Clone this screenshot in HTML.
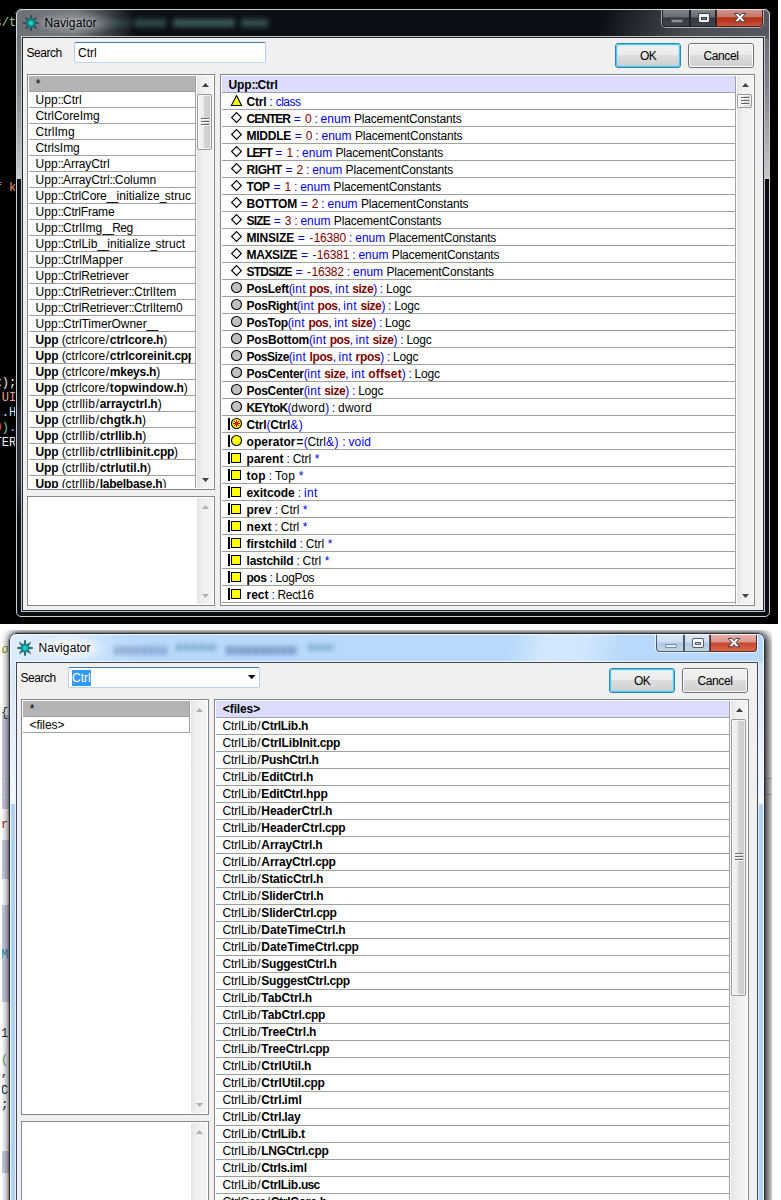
<!DOCTYPE html>
<html><head><meta charset="utf-8"><title>Navigator</title>
<style>
html,body{margin:0;padding:0}
body{width:781px;height:1200px;overflow:hidden;background:#fff;position:relative;font-family:"Liberation Sans",sans-serif;font-size:12px;color:#000}
div,svg,i,b{position:absolute;box-sizing:border-box;display:block}
span{white-space:pre}
#s1{left:0;top:0;width:778px;height:624px;background:#000;overflow:hidden}
#s2{left:2px;top:630px;width:770px;height:570px;background:#fff;overflow:hidden}
.code{font-family:"Liberation Mono",monospace;font-size:12px;line-height:16px;white-space:pre}
.win{width:756px;border-radius:7px 7px 6px 6px;overflow:hidden}
.w1{background:#0c1016}
.w2{background:#b0d2f8;box-shadow:0 0 8px 1px rgba(0,0,0,.6),4px 2px 7px 1px rgba(0,0,0,.5),0 0 2px rgba(0,0,0,.5)}
.w2 .tb{left:0;top:0;right:0;height:30px;background:linear-gradient(100deg,rgba(255,255,255,0) 0,rgba(255,255,255,0) 66%,rgba(255,255,255,.4) 71%,rgba(255,255,255,.35) 76%,rgba(255,255,255,0) 81%),linear-gradient(to right,rgba(255,255,255,.5) 0,rgba(255,255,255,.45) 70px,rgba(255,255,255,.12) 105px,rgba(255,255,255,0) 135px),#b8d9fb}
.w2 .side{background:linear-gradient(#d6e5f6,#e9f1fb 60%,#f2f7fd);top:30px;height:141px}
.w2 .glow{left:20px;top:2px;width:80px;height:26px;background:radial-gradient(ellipse 50% 50% at 50% 50%,rgba(255,255,255,.85),rgba(255,255,255,.4) 60%,rgba(255,255,255,0) 100%)}
.fr{left:0;top:0;right:0;bottom:0;border-radius:7px 7px 6px 6px;z-index:5;pointer-events:none}
.w1 .fr{border:1px solid #000}
.w1 .fr::after{content:"";position:absolute;box-sizing:border-box;left:0;top:0;right:0;bottom:0;border:1px solid rgba(235,238,240,.85);border-radius:6px 6px 5px 5px}
.w2 .fr{border:1px solid #27303a;box-shadow:inset 0 0 0 1px rgba(255,255,255,.8)}
.side{top:16px;width:4px;height:155px;background:linear-gradient(#686c72,#80848a 40%,#c8cacc)}
.side.l{left:2px}.side.r{right:2px}
.w1 .glow{left:0;top:0;width:130px;height:30px;background:linear-gradient(to right,#6e7278 0,#767a80 60px,rgba(80,84,90,.7) 94px,rgba(40,44,50,0) 120px)}
.glow2{left:14px;top:3px;width:92px;height:24px;background:radial-gradient(ellipse 50% 50% at 50% 50%,rgba(180,184,188,.8),rgba(150,154,158,.5) 55%,rgba(110,114,118,0) 100%)}
.refl{left:540px;top:0;width:216px;height:30px;background:linear-gradient(105deg,rgba(84,88,94,0) 0,rgba(84,88,94,0) 22%,rgba(84,88,94,.85) 62%,rgba(86,90,96,1) 100%)}
.star{left:7px;top:6px}
.title{left:29.5px;top:7px;line-height:16px;white-space:nowrap}
.w1 .title{text-shadow:0 0 4px rgba(255,255,255,.5)}
.w1 .lg{left:2px;width:4px;top:380px;height:130px;background:linear-gradient(rgba(70,80,90,0),rgba(70,80,90,.55) 25%,rgba(70,80,90,.55) 70%,rgba(70,80,90,0))}
.w2 .title{text-shadow:0 0 5px #fff,0 0 8px #fff}
.blur{filter:blur(2.5px);height:5px;top:14px}
.w1 .blur{background:#3f6060;top:11px;height:8px;filter:blur(2.5px)}
.w1 .b1{left:92px;width:24px;opacity:.45}.w1 .b2{left:119px;width:32px;opacity:.7}.w1 .b3{left:158px;width:62px;opacity:.9}.w1 .b4{left:226px;width:27px;opacity:.8}
.w2 .blur{background:repeating-linear-gradient(90deg,#3e5c90 0,#3e5c90 4px,rgba(62,92,144,.55) 4px,rgba(62,92,144,.55) 7px);top:13px;height:9px;filter:blur(2px)}
.w2 .b1{left:105px;width:53px;opacity:.38}.w2 .b2{left:167px;width:41px;opacity:.36;top:11px;height:7px;background:repeating-linear-gradient(90deg,#2a7088 0,#2a7088 5px,rgba(42,112,136,.55) 5px,rgba(42,112,136,.55) 8px)}.w2 .b3{left:217px;width:71px;opacity:.5}.w2 .b4{left:299px;width:26px;opacity:.36;top:11px;height:7px;background:repeating-linear-gradient(90deg,#2a7088 0,#2a7088 5px,rgba(42,112,136,.55) 5px,rgba(42,112,136,.55) 8px)}
.caps{left:646px;top:1px;width:103px;height:19px;border-radius:0 0 5px 5px;overflow:hidden}
.w1 .caps{box-shadow:inset 0 0 0 1px rgba(200,205,210,.75);border:0}
.w2 .caps{box-shadow:inset 0 0 0 1px rgba(255,255,255,.7)}
.cb{top:0;height:18px}
.cb.min{left:1px;width:28px}.cb.max{left:29px;width:26px}.cb.cls{left:55px;width:47px;border-radius:0 0 4px 0}
.cb.min{border-radius:0 0 0 4px}
.w1 .cb{border:1px solid #20242a;border-top:0;background:linear-gradient(#80848a 0,#6c7076 46%,#363a40 52%,#40444a 100%)}
.w1 .cb.cls{background:linear-gradient(#d09a90 0,#c67668 46%,#b22e16 52%,#c8523a 100%);border-color:#50201a}
.w2 .cb{border:1px solid #4e5a6a;border-top:0;background:linear-gradient(#dbe8f5 0,#cfdff0 48%,#b3c9e2 52%,#c3d5ea 100%)}
.w2 .cb.cls{background:linear-gradient(#e7b5ad 0,#dc968a 48%,#c8432b 52%,#d9694f 100%);border-color:#5a2a24}
.cb.min i{left:8px;top:10px;width:12px;height:4px;border-radius:1px}
.w1 .cb.min i{background:#8e9298;border:1px solid #55595f}
.w2 .cb.min i{background:#e6eef8;border:1px solid #7a8aa0}
.cb.max i{left:8px;top:5px;width:10px;height:8px;border-radius:1px}
.w1 .cb.max i{border:2px solid #f4f4f4;border-top-width:3px;box-shadow:0 0 0 1px #3a3e44,inset 0 0 0 1px #3a3e44;background:#7a7e84}
.w2 .cb.max i{border:2px solid #fbfdff;border-top-width:3px;box-shadow:0 0 0 1px #55606e,inset 0 0 0 1px #55606e;background:#b8cce2}
.cb.cls svg{left:16px;top:3px}
.cl{left:8px;top:30px;width:740px;background:#f0f0f0}
.w1 .cl{box-shadow:0 0 0 1px #23272d,0 0 0 2px rgba(225,228,230,.85)}
.w2 .cl{box-shadow:0 0 0 1px #3c4754,0 0 0 2px rgba(255,255,255,.75)}
.lbl{line-height:16px;white-space:nowrap}
.edit{background:#fff;border:1px solid #b5cfe7;border-top-color:#3d7bad;border-bottom-color:#b7d9ed;border-radius:2px}
.etx{left:3px;top:1.5px;line-height:16px;white-space:nowrap}
.sel{background:#3399ff;color:#fff;display:inline-block;position:static}
.sel span{color:#fff}
.btn{width:66px;height:25px;border:1px solid #707070;border-radius:3px;background:linear-gradient(#f2f2f2 0,#ebebeb 46%,#dddddd 50%,#cfcfcf 100%)}
.btn b{left:0;top:0;right:0;bottom:0;border:1px solid rgba(255,255,255,.9);border-radius:2px}
.btn.def{border-color:#3c7fb1}
.btn.def b{border:1px solid #3fd0f7;box-shadow:inset 0 0 0 1px rgba(120,220,250,.35)}
.bt{left:0;right:0;top:4px;line-height:16px;text-align:center;white-space:nowrap}
.pane{background:#fff;box-shadow:inset 0 0 0 1px #828790}
.ct{left:2px;top:2px;right:2px;bottom:2px;overflow:hidden;background:#fff}
.lh{left:0;top:0;background:#b4b4b4}
.rh{left:0;top:0;background:#dcdcfc}
.hl{height:1px;background:#a0a0a0;left:0}
.vl{width:1px;background:#a0a0a0}
.tx{top:0;line-height:16px;white-space:nowrap}
.lr .tx{left:6px;width:156px;height:16px;overflow:hidden;padding-left:.5px}
.lr{left:0;width:166px;height:16px;border-bottom:1px solid #a0a0a0;overflow:hidden}
.w1 .rr .tx{top:1px}
.rr{left:0;width:513px;height:17px;border-bottom:1px solid #a0a0a0;overflow:hidden}
.ic{left:5px;top:0}
.sb{width:17px;background:linear-gradient(to right,#e4e4e4,#f0f0f0 35%,#f3f3f3)}
.th{left:0;width:15px;border:1px solid #989898;border-radius:2px;background:linear-gradient(to right,#f4f4f4 0,#ebebeb 45%,#d4d4d4 50%,#cdcdcd 100%);box-shadow:inset 0 0 0 1px rgba(255,255,255,.7)}
.th i{left:3px;width:8px;height:8px;background:linear-gradient(#666 0,#666 1px,#fff 1px,#fff 2px,transparent 2px,transparent 3px,#666 3px,#666 4px,#fff 4px,#fff 5px,transparent 5px,transparent 6px,#666 6px,#666 7px,#fff 7px,#fff 8px)}
.ed2{left:0;top:0;right:0;bottom:0}
.band{left:0;width:12px;background:#cfcfe2}
.band.r{left:auto;right:0}
.gl{left:0;right:0;height:1px;background:#a8dca8}
.shl{left:0;top:0;width:8px;bottom:0;background:linear-gradient(to right,rgba(0,0,0,0),rgba(0,0,0,.12) 50%,rgba(0,0,0,.4))}
.shr{right:0;top:0;width:7px;bottom:0;background:linear-gradient(to left,rgba(0,0,0,0),rgba(0,0,0,.12) 50%,rgba(0,0,0,.4))}
.sht{left:0;right:0;top:0;height:3px;background:linear-gradient(rgba(0,0,0,0),rgba(0,0,0,.25))}

</style></head>
<body>
<div id="s1"><div class="code" style="left:-5.5px;top:15px;color:#8fd07f;font-weight:normal">s/t</div><div class="code" style="left:-5.5px;top:179.5px;color:#f0906a;font-weight:normal">f k</div><div class="code" style="left:-5.5px;top:374.5px;color:#f0f0f0;">x);</div><div class="code" style="left:-5.5px;top:389.5px;color:#e8a090;"> UI</div><div class="code" style="left:-5.5px;top:404.5px;color:#d0e0f0;"> .H</div><div class="code" style="left:-5.5px;top:419.5px"><span style="color:#e06040">0</span><span style="color:#60d0a0">)</span><span style="color:#a0b0e0">.</span></div><div class="code" style="left:-5.5px;top:434.5px;color:#f0f0f0;">TER</div>
<div class="win w1" style="left:15px;top:8px;height:610px"><div class="fr"></div><div class="side l"></div><div class="side r"></div><div class="lg"></div><div class="refl"></div><div class="glow"></div><div class="glow2"></div><div class="blur b1"></div><div class="blur b2"></div><div class="blur b3"></div><div class="blur b4"></div><svg class="star" width="18" height="18" viewBox="-9 -9 18 18"><defs><radialGradient id="sg1"><stop offset="0" stop-color="#20ecec"/><stop offset=".32" stop-color="#0caaaa"/><stop offset="1" stop-color="#066868"/></radialGradient></defs>
<path d="M0 -8 L1.2 -2.9 L5.5 -5.5 L2.9 -1.2 L8 0 L2.9 1.2 L5.5 5.5 L1.2 2.9 L0 8 L-1.2 2.9 L-5.5 5.5 L-2.9 1.2 L-8 0 L-2.9 -1.2 L-5.5 -5.5 L-1.2 -2.9 Z" fill="url(#sg1)" stroke="#154040" stroke-width=".8" stroke-opacity=".85"/></svg><div class="title"><span style="letter-spacing:0.09px;">Navigator</span></div><div class="caps"><div class="cb min"><i></i></div><div class="cb max"><i></i></div><div class="cb cls"><svg width="14" height="11" viewBox="0 0 14 11"><path d="M1.2 1.4h3.9L7 3.7 8.9 1.4h3.9L9 5.6l3.8 4.2H8.9L7 7.5 5.1 9.8H1.2L5 5.6z" fill="#fff" stroke="#3c3c46" stroke-width="1" stroke-linejoin="round"/></svg></div></div><div class="cl" style="height:572px"><div class="lbl" style="left:3.5px;top:7px"><span style="letter-spacing:-0.46px;">Search</span></div>
<div class="edit" style="left:51px;top:4px;width:192px;height:21px"><div class="etx"><span style="letter-spacing:-0.02px;">Ctrl</span></div></div>
<div class="btn def" style="left:592px;top:5px"><b></b><div class="bt"><span style="letter-spacing:-0.67px;">OK</span></div></div>
<div class="btn" style="left:665px;top:5px"><b></b><div class="bt"><span style="letter-spacing:-0.39px;">Cancel</span></div></div>
<div class="pane" style="left:4px;top:36px;width:188px;height:416px"><div class="ct"><div class="lh" style="width:166px;height:15px"><div class="tx" style="left:6.5px"><span style="padding:0 0.17px;">*</span></div></div><div class="hl" style="top:15px;width:166px"></div><div class="lr" style="top:16px"><div class="tx"><span style="letter-spacing:0.11px;">Upp</span><span style="letter-spacing:-0.73px;">::</span><span style="letter-spacing:-0.02px;">Ctrl</span></div></div><div class="lr" style="top:32px"><div class="tx"><span style="letter-spacing:-0.06px;">CtrlCoreImg</span></div></div><div class="lr" style="top:48px"><div class="tx"><span style="letter-spacing:0.07px;">CtrlImg</span></div></div><div class="lr" style="top:64px"><div class="tx"><span style="letter-spacing:-0.06px;">CtrlsImg</span></div></div><div class="lr" style="top:80px"><div class="tx"><span style="letter-spacing:0.11px;">Upp</span><span style="letter-spacing:-0.73px;">::</span><span style="letter-spacing:-0.09px;">ArrayCtrl</span></div></div><div class="lr" style="top:96px"><div class="tx"><span style="letter-spacing:0.11px;">Upp</span><span style="letter-spacing:-0.73px;">::</span><span style="letter-spacing:-0.09px;">ArrayCtrl</span><span style="letter-spacing:-0.73px;">::</span><span style="letter-spacing:-0.02px;">Column</span></div></div><div class="lr" style="top:112px"><div class="tx"><span style="letter-spacing:0.11px;">Upp</span><span style="letter-spacing:-0.73px;">::</span><span style="letter-spacing:-0.15px;">CtrlCore</span><span style="letter-spacing:-1.69px;">__</span><span style="letter-spacing:0.05px;">initialize</span><span style="letter-spacing:-1.69px;">_</span><span style="letter-spacing:0.06px;">struct</span></div></div><div class="lr" style="top:128px"><div class="tx"><span style="letter-spacing:0.11px;">Upp</span><span style="letter-spacing:-0.73px;">::</span><span style="letter-spacing:-0.23px;">CtrlFrame</span></div></div><div class="lr" style="top:144px"><div class="tx"><span style="letter-spacing:0.11px;">Upp</span><span style="letter-spacing:-0.73px;">::</span><span style="letter-spacing:0.07px;">CtrlImg</span><span style="letter-spacing:-1.69px;">__</span><span style="letter-spacing:-0.50px;">Reg</span></div></div><div class="lr" style="top:160px"><div class="tx"><span style="letter-spacing:0.11px;">Upp</span><span style="letter-spacing:-0.73px;">::</span><span style="letter-spacing:-0.07px;">CtrlLib</span><span style="letter-spacing:-1.69px;">__</span><span style="letter-spacing:0.05px;">initialize</span><span style="letter-spacing:-1.69px;">_</span><span style="letter-spacing:0.06px;">struct</span></div></div><div class="lr" style="top:176px"><div class="tx"><span style="letter-spacing:0.11px;">Upp</span><span style="letter-spacing:-0.73px;">::</span><span style="letter-spacing:0.06px;">CtrlMapper</span></div></div><div class="lr" style="top:192px"><div class="tx"><span style="letter-spacing:0.11px;">Upp</span><span style="letter-spacing:-0.73px;">::</span><span style="letter-spacing:-0.13px;">CtrlRetriever</span></div></div><div class="lr" style="top:208px"><div class="tx"><span style="letter-spacing:0.11px;">Upp</span><span style="letter-spacing:-0.73px;">::</span><span style="letter-spacing:-0.13px;">CtrlRetriever</span><span style="letter-spacing:-0.73px;">::</span><span style="letter-spacing:0.05px;">CtrlItem</span></div></div><div class="lr" style="top:224px"><div class="tx"><span style="letter-spacing:0.11px;">Upp</span><span style="letter-spacing:-0.73px;">::</span><span style="letter-spacing:-0.13px;">CtrlRetriever</span><span style="letter-spacing:-0.73px;">::</span><span style="letter-spacing:0.02px;">CtrlItem0</span></div></div><div class="lr" style="top:240px"><div class="tx"><span style="letter-spacing:0.11px;">Upp</span><span style="letter-spacing:-0.73px;">::</span><span style="letter-spacing:-0.05px;">CtrlTimerOwner</span><span style="letter-spacing:-1.69px;">__</span></div></div><div class="lr" style="top:256px"><div class="tx"><span style="letter-spacing:-0.09px;font-weight:bold;">Upp</span><span style="letter-spacing:-0.21px;"> (</span><span style="letter-spacing:0.04px;">ctrlcore</span><span style="padding:0 0.67px;">/</span><span style="letter-spacing:-0.11px;font-weight:bold;">ctrlcore</span><span style="letter-spacing:-0.35px;font-weight:bold;">.</span><span style="letter-spacing:-0.07px;font-weight:bold;">h</span><span style="letter-spacing:-0.38px;">)</span></div></div><div class="lr" style="top:272px"><div class="tx"><span style="letter-spacing:-0.09px;font-weight:bold;">Upp</span><span style="letter-spacing:-0.21px;"> (</span><span style="letter-spacing:0.04px;">ctrlcore</span><span style="padding:0 0.67px;">/</span><span style="letter-spacing:-0.03px;font-weight:bold;">ctrlcoreinit</span><span style="letter-spacing:-0.35px;font-weight:bold;">.</span><span style="letter-spacing:-0.32px;font-weight:bold;">cpp</span><span style="letter-spacing:-0.38px;">)</span></div></div><div class="lr" style="top:288px"><div class="tx"><span style="letter-spacing:-0.09px;font-weight:bold;">Upp</span><span style="letter-spacing:-0.21px;"> (</span><span style="letter-spacing:0.04px;">ctrlcore</span><span style="padding:0 0.67px;">/</span><span style="letter-spacing:-0.25px;font-weight:bold;">mkeys</span><span style="letter-spacing:-0.35px;font-weight:bold;">.</span><span style="letter-spacing:-0.07px;font-weight:bold;">h</span><span style="letter-spacing:-0.38px;">)</span></div></div><div class="lr" style="top:304px"><div class="tx"><span style="letter-spacing:-0.09px;font-weight:bold;">Upp</span><span style="letter-spacing:-0.21px;"> (</span><span style="letter-spacing:0.04px;">ctrlcore</span><span style="padding:0 0.67px;">/</span><span style="letter-spacing:0.11px;font-weight:bold;">topwindow</span><span style="letter-spacing:-0.35px;font-weight:bold;">.</span><span style="letter-spacing:-0.07px;font-weight:bold;">h</span><span style="letter-spacing:-0.38px;">)</span></div></div><div class="lr" style="top:320px"><div class="tx"><span style="letter-spacing:-0.09px;font-weight:bold;">Upp</span><span style="letter-spacing:-0.21px;"> (</span><span style="letter-spacing:0.22px;">ctrllib</span><span style="padding:0 0.67px;">/</span><span style="letter-spacing:-0.04px;font-weight:bold;">arrayctrl</span><span style="letter-spacing:-0.35px;font-weight:bold;">.</span><span style="letter-spacing:-0.07px;font-weight:bold;">h</span><span style="letter-spacing:-0.38px;">)</span></div></div><div class="lr" style="top:336px"><div class="tx"><span style="letter-spacing:-0.09px;font-weight:bold;">Upp</span><span style="letter-spacing:-0.21px;"> (</span><span style="letter-spacing:0.22px;">ctrllib</span><span style="padding:0 0.67px;">/</span><span style="letter-spacing:-0.01px;font-weight:bold;">chgtk</span><span style="letter-spacing:-0.35px;font-weight:bold;">.</span><span style="letter-spacing:-0.07px;font-weight:bold;">h</span><span style="letter-spacing:-0.38px;">)</span></div></div><div class="lr" style="top:352px"><div class="tx"><span style="letter-spacing:-0.09px;font-weight:bold;">Upp</span><span style="letter-spacing:-0.21px;"> (</span><span style="letter-spacing:0.22px;">ctrllib</span><span style="padding:0 0.67px;">/</span><span style="letter-spacing:-0.04px;font-weight:bold;">ctrllib</span><span style="letter-spacing:-0.35px;font-weight:bold;">.</span><span style="letter-spacing:-0.07px;font-weight:bold;">h</span><span style="letter-spacing:-0.38px;">)</span></div></div><div class="lr" style="top:368px"><div class="tx"><span style="letter-spacing:-0.09px;font-weight:bold;">Upp</span><span style="letter-spacing:-0.21px;"> (</span><span style="letter-spacing:0.22px;">ctrllib</span><span style="padding:0 0.67px;">/</span><span style="letter-spacing:0.02px;font-weight:bold;">ctrllibinit</span><span style="letter-spacing:-0.35px;font-weight:bold;">.</span><span style="letter-spacing:-0.32px;font-weight:bold;">cpp</span><span style="letter-spacing:-0.38px;">)</span></div></div><div class="lr" style="top:384px"><div class="tx"><span style="letter-spacing:-0.09px;font-weight:bold;">Upp</span><span style="letter-spacing:-0.21px;"> (</span><span style="letter-spacing:0.22px;">ctrllib</span><span style="padding:0 0.67px;">/</span><span style="letter-spacing:0.05px;font-weight:bold;">ctrlutil</span><span style="letter-spacing:-0.35px;font-weight:bold;">.</span><span style="letter-spacing:-0.07px;font-weight:bold;">h</span><span style="letter-spacing:-0.38px;">)</span></div></div><div class="lr" style="top:400px"><div class="tx"><span style="letter-spacing:-0.09px;font-weight:bold;">Upp</span><span style="letter-spacing:-0.21px;"> (</span><span style="letter-spacing:0.22px;">ctrllib</span><span style="padding:0 0.67px;">/</span><span style="letter-spacing:-0.24px;font-weight:bold;">labelbase</span><span style="letter-spacing:-0.35px;font-weight:bold;">.</span><span style="letter-spacing:-0.07px;font-weight:bold;">h</span><span style="letter-spacing:-0.38px;">)</span></div></div><div class="vl" style="left:166px;top:0;height:412px"></div><div class="sb" style="left:168px;top:0px;height:412px"><svg width="7" height="4" viewBox="0 0 7 4" style="position:absolute;left:5px;top:7px"><path d="M0 4 L3.5 0 L7 4 Z" fill="#404040"/></svg><svg width="7" height="4" viewBox="0 0 7 4" style="position:absolute;left:5px;bottom:6px"><path d="M0 0 L7 0 L3.5 4 Z" fill="#404040"/></svg><div class="th" style="top:18px;height:56px"><i style="top:23px"></i></div></div></div></div>
<div class="pane" style="left:4px;top:458px;width:188px;height:110px"><div class="ct"><div class="sb" style="left:168px;top:0px;height:106px"><svg width="7" height="4" viewBox="0 0 7 4" style="position:absolute;left:5px;top:7px"><path d="M0 4 L3.5 0 L7 4 Z" fill="#b0b0b0"/></svg><svg width="7" height="4" viewBox="0 0 7 4" style="position:absolute;left:5px;bottom:6px"><path d="M0 0 L7 0 L3.5 4 Z" fill="#b0b0b0"/></svg></div></div></div>
<div class="pane" style="left:197px;top:36px;width:535px;height:532px"><div class="ct"><div class="rh" style="width:513px;height:16px"><div class="tx" style="left:6.5px;top:1px"><span style="letter-spacing:-0.09px;font-weight:bold;">Upp</span><span style="letter-spacing:-1.01px;font-weight:bold;">::</span><span style="letter-spacing:-0.16px;font-weight:bold;">Ctrl</span></div></div><div class="hl" style="top:16px;width:513px"></div><div class="rr" style="top:17px"><svg class="ic" width="17" height="16" viewBox="0 0 17 16"><path d="M9.5 2.6 L14.6 12.5 H4.4 Z" fill="#ffff00" stroke="#000" stroke-width="1.1" stroke-linejoin="miter"/></svg><div class="tx" style="left:24.5px"><span style="letter-spacing:-0.16px;font-weight:bold;">Ctrl</span><span style="letter-spacing:-0.28px;color:#0000f0;"> : </span><span style="letter-spacing:-0.52px;color:#0000f0;">class</span></div></div><div class="rr" style="top:34px"><svg class="ic" width="17" height="16" viewBox="0 0 17 16"><path d="M9.5 2.6 L14.4 7.5 L9.5 12.4 L4.6 7.5 Z" fill="#fff" stroke="#000" stroke-width="1.1"/></svg><div class="tx" style="left:24.5px"><span style="letter-spacing:-0.96px;font-weight:bold;">CENTER</span><span style="letter-spacing:0.37px;color:#0000f0;"> = </span><span style="letter-spacing:-0.20px;color:#800000;">0</span><span style="letter-spacing:-0.28px;color:#0000f0;"> : </span><span style="letter-spacing:0.03px;color:#0000f0;">enum</span><span style="letter-spacing:-0.05px;color:#0000f0;"> </span><span style="letter-spacing:-0.18px;">PlacementConstants</span></div></div><div class="rr" style="top:51px"><svg class="ic" width="17" height="16" viewBox="0 0 17 16"><path d="M9.5 2.6 L14.4 7.5 L9.5 12.4 L4.6 7.5 Z" fill="#fff" stroke="#000" stroke-width="1.1"/></svg><div class="tx" style="left:24.5px"><span style="letter-spacing:-0.25px;font-weight:bold;">MIDDLE</span><span style="letter-spacing:0.37px;color:#0000f0;"> = </span><span style="letter-spacing:-0.20px;color:#800000;">0</span><span style="letter-spacing:-0.28px;color:#0000f0;"> : </span><span style="letter-spacing:0.03px;color:#0000f0;">enum</span><span style="letter-spacing:-0.05px;color:#0000f0;"> </span><span style="letter-spacing:-0.18px;">PlacementConstants</span></div></div><div class="rr" style="top:68px"><svg class="ic" width="17" height="16" viewBox="0 0 17 16"><path d="M9.5 2.6 L14.4 7.5 L9.5 12.4 L4.6 7.5 Z" fill="#fff" stroke="#000" stroke-width="1.1"/></svg><div class="tx" style="left:24.5px"><span style="letter-spacing:-1.23px;font-weight:bold;">LEFT</span><span style="letter-spacing:0.37px;color:#0000f0;"> = </span><span style="letter-spacing:-0.20px;color:#800000;">1</span><span style="letter-spacing:-0.28px;color:#0000f0;"> : </span><span style="letter-spacing:0.03px;color:#0000f0;">enum</span><span style="letter-spacing:-0.05px;color:#0000f0;"> </span><span style="letter-spacing:-0.18px;">PlacementConstants</span></div></div><div class="rr" style="top:85px"><svg class="ic" width="17" height="16" viewBox="0 0 17 16"><path d="M9.5 2.6 L14.4 7.5 L9.5 12.4 L4.6 7.5 Z" fill="#fff" stroke="#000" stroke-width="1.1"/></svg><div class="tx" style="left:24.5px"><span style="letter-spacing:-0.43px;font-weight:bold;">RIGHT</span><span style="letter-spacing:0.37px;color:#0000f0;"> = </span><span style="letter-spacing:-0.20px;color:#800000;">2</span><span style="letter-spacing:-0.28px;color:#0000f0;"> : </span><span style="letter-spacing:0.03px;color:#0000f0;">enum</span><span style="letter-spacing:-0.05px;color:#0000f0;"> </span><span style="letter-spacing:-0.18px;">PlacementConstants</span></div></div><div class="rr" style="top:102px"><svg class="ic" width="17" height="16" viewBox="0 0 17 16"><path d="M9.5 2.6 L14.4 7.5 L9.5 12.4 L4.6 7.5 Z" fill="#fff" stroke="#000" stroke-width="1.1"/></svg><div class="tx" style="left:24.5px"><span style="letter-spacing:-0.42px;font-weight:bold;">TOP</span><span style="letter-spacing:0.37px;color:#0000f0;"> = </span><span style="letter-spacing:-0.20px;color:#800000;">1</span><span style="letter-spacing:-0.28px;color:#0000f0;"> : </span><span style="letter-spacing:0.03px;color:#0000f0;">enum</span><span style="letter-spacing:-0.05px;color:#0000f0;"> </span><span style="letter-spacing:-0.18px;">PlacementConstants</span></div></div><div class="rr" style="top:119px"><svg class="ic" width="17" height="16" viewBox="0 0 17 16"><path d="M9.5 2.6 L14.4 7.5 L9.5 12.4 L4.6 7.5 Z" fill="#fff" stroke="#000" stroke-width="1.1"/></svg><div class="tx" style="left:24.5px"><span style="letter-spacing:-0.21px;font-weight:bold;">BOTTOM</span><span style="letter-spacing:0.37px;color:#0000f0;"> = </span><span style="letter-spacing:-0.20px;color:#800000;">2</span><span style="letter-spacing:-0.28px;color:#0000f0;"> : </span><span style="letter-spacing:0.03px;color:#0000f0;">enum</span><span style="letter-spacing:-0.05px;color:#0000f0;"> </span><span style="letter-spacing:-0.18px;">PlacementConstants</span></div></div><div class="rr" style="top:136px"><svg class="ic" width="17" height="16" viewBox="0 0 17 16"><path d="M9.5 2.6 L14.4 7.5 L9.5 12.4 L4.6 7.5 Z" fill="#fff" stroke="#000" stroke-width="1.1"/></svg><div class="tx" style="left:24.5px"><span style="letter-spacing:-0.81px;font-weight:bold;">SIZE</span><span style="letter-spacing:0.37px;color:#0000f0;"> = </span><span style="letter-spacing:-0.20px;color:#800000;">3</span><span style="letter-spacing:-0.28px;color:#0000f0;"> : </span><span style="letter-spacing:0.03px;color:#0000f0;">enum</span><span style="letter-spacing:-0.05px;color:#0000f0;"> </span><span style="letter-spacing:-0.18px;">PlacementConstants</span></div></div><div class="rr" style="top:153px"><svg class="ic" width="17" height="16" viewBox="0 0 17 16"><path d="M9.5 2.6 L14.4 7.5 L9.5 12.4 L4.6 7.5 Z" fill="#fff" stroke="#000" stroke-width="1.1"/></svg><div class="tx" style="left:24.5px"><span style="letter-spacing:-0.16px;font-weight:bold;">MINSIZE</span><span style="letter-spacing:0.37px;color:#0000f0;"> = </span><span style="padding:0 0.40px;color:#800000;">-</span><span style="letter-spacing:-0.20px;color:#800000;">16380</span><span style="letter-spacing:-0.28px;color:#0000f0;"> : </span><span style="letter-spacing:0.03px;color:#0000f0;">enum</span><span style="letter-spacing:-0.05px;color:#0000f0;"> </span><span style="letter-spacing:-0.18px;">PlacementConstants</span></div></div><div class="rr" style="top:170px"><svg class="ic" width="17" height="16" viewBox="0 0 17 16"><path d="M9.5 2.6 L14.4 7.5 L9.5 12.4 L4.6 7.5 Z" fill="#fff" stroke="#000" stroke-width="1.1"/></svg><div class="tx" style="left:24.5px"><span style="letter-spacing:-0.37px;font-weight:bold;">MAXSIZE</span><span style="letter-spacing:0.37px;color:#0000f0;"> = </span><span style="padding:0 0.40px;color:#800000;">-</span><span style="letter-spacing:-0.20px;color:#800000;">16381</span><span style="letter-spacing:-0.28px;color:#0000f0;"> : </span><span style="letter-spacing:0.03px;color:#0000f0;">enum</span><span style="letter-spacing:-0.05px;color:#0000f0;"> </span><span style="letter-spacing:-0.18px;">PlacementConstants</span></div></div><div class="rr" style="top:187px"><svg class="ic" width="17" height="16" viewBox="0 0 17 16"><path d="M9.5 2.6 L14.4 7.5 L9.5 12.4 L4.6 7.5 Z" fill="#fff" stroke="#000" stroke-width="1.1"/></svg><div class="tx" style="left:24.5px"><span style="letter-spacing:-0.76px;font-weight:bold;">STDSIZE</span><span style="letter-spacing:0.37px;color:#0000f0;"> = </span><span style="padding:0 0.40px;color:#800000;">-</span><span style="letter-spacing:-0.20px;color:#800000;">16382</span><span style="letter-spacing:-0.28px;color:#0000f0;"> : </span><span style="letter-spacing:0.03px;color:#0000f0;">enum</span><span style="letter-spacing:-0.05px;color:#0000f0;"> </span><span style="letter-spacing:-0.18px;">PlacementConstants</span></div></div><div class="rr" style="top:204px"><svg class="ic" width="17" height="16" viewBox="0 0 17 16"><circle cx="9.5" cy="7.5" r="5" fill="#c0c0c0" stroke="#000" stroke-width="1.1"/></svg><div class="tx" style="left:24.5px"><span style="letter-spacing:-0.27px;font-weight:bold;">PosLeft</span><span style="letter-spacing:-0.38px;color:#0000f0;">(</span><span style="letter-spacing:0.36px;color:#0000f0;">int</span><span style="letter-spacing:-0.05px;color:#0000f0;"> </span><span style="letter-spacing:-0.49px;font-weight:bold;color:#800000;">pos</span><span style="letter-spacing:-0.39px;color:#0000f0;">, </span><span style="letter-spacing:0.36px;color:#0000f0;">int</span><span style="letter-spacing:-0.05px;color:#0000f0;"> </span><span style="letter-spacing:-0.42px;font-weight:bold;color:#800000;">size</span><span style="letter-spacing:-0.38px;color:#0000f0;">)</span><span style="letter-spacing:-0.28px;color:#0000f0;"> : </span><span style="letter-spacing:-0.19px;">Logc</span></div></div><div class="rr" style="top:221px"><svg class="ic" width="17" height="16" viewBox="0 0 17 16"><circle cx="9.5" cy="7.5" r="5" fill="#c0c0c0" stroke="#000" stroke-width="1.1"/></svg><div class="tx" style="left:24.5px"><span style="letter-spacing:-0.29px;font-weight:bold;">PosRight</span><span style="letter-spacing:-0.38px;color:#0000f0;">(</span><span style="letter-spacing:0.36px;color:#0000f0;">int</span><span style="letter-spacing:-0.05px;color:#0000f0;"> </span><span style="letter-spacing:-0.49px;font-weight:bold;color:#800000;">pos</span><span style="letter-spacing:-0.39px;color:#0000f0;">, </span><span style="letter-spacing:0.36px;color:#0000f0;">int</span><span style="letter-spacing:-0.05px;color:#0000f0;"> </span><span style="letter-spacing:-0.42px;font-weight:bold;color:#800000;">size</span><span style="letter-spacing:-0.38px;color:#0000f0;">)</span><span style="letter-spacing:-0.28px;color:#0000f0;"> : </span><span style="letter-spacing:-0.19px;">Logc</span></div></div><div class="rr" style="top:238px"><svg class="ic" width="17" height="16" viewBox="0 0 17 16"><circle cx="9.5" cy="7.5" r="5" fill="#c0c0c0" stroke="#000" stroke-width="1.1"/></svg><div class="tx" style="left:24.5px"><span style="letter-spacing:-0.32px;font-weight:bold;">PosTop</span><span style="letter-spacing:-0.38px;color:#0000f0;">(</span><span style="letter-spacing:0.36px;color:#0000f0;">int</span><span style="letter-spacing:-0.05px;color:#0000f0;"> </span><span style="letter-spacing:-0.49px;font-weight:bold;color:#800000;">pos</span><span style="letter-spacing:-0.39px;color:#0000f0;">, </span><span style="letter-spacing:0.36px;color:#0000f0;">int</span><span style="letter-spacing:-0.05px;color:#0000f0;"> </span><span style="letter-spacing:-0.42px;font-weight:bold;color:#800000;">size</span><span style="letter-spacing:-0.38px;color:#0000f0;">)</span><span style="letter-spacing:-0.28px;color:#0000f0;"> : </span><span style="letter-spacing:-0.19px;">Logc</span></div></div><div class="rr" style="top:255px"><svg class="ic" width="17" height="16" viewBox="0 0 17 16"><circle cx="9.5" cy="7.5" r="5" fill="#c0c0c0" stroke="#000" stroke-width="1.1"/></svg><div class="tx" style="left:24.5px"><span style="letter-spacing:-0.16px;font-weight:bold;">PosBottom</span><span style="letter-spacing:-0.38px;color:#0000f0;">(</span><span style="letter-spacing:0.36px;color:#0000f0;">int</span><span style="letter-spacing:-0.05px;color:#0000f0;"> </span><span style="letter-spacing:-0.49px;font-weight:bold;color:#800000;">pos</span><span style="letter-spacing:-0.39px;color:#0000f0;">, </span><span style="letter-spacing:0.36px;color:#0000f0;">int</span><span style="letter-spacing:-0.05px;color:#0000f0;"> </span><span style="letter-spacing:-0.42px;font-weight:bold;color:#800000;">size</span><span style="letter-spacing:-0.38px;color:#0000f0;">)</span><span style="letter-spacing:-0.28px;color:#0000f0;"> : </span><span style="letter-spacing:-0.19px;">Logc</span></div></div><div class="rr" style="top:272px"><svg class="ic" width="17" height="16" viewBox="0 0 17 16"><circle cx="9.5" cy="7.5" r="5" fill="#c0c0c0" stroke="#000" stroke-width="1.1"/></svg><div class="tx" style="left:24.5px"><span style="letter-spacing:-0.53px;font-weight:bold;">PosSize</span><span style="letter-spacing:-0.38px;color:#0000f0;">(</span><span style="letter-spacing:0.36px;color:#0000f0;">int</span><span style="letter-spacing:-0.05px;color:#0000f0;"> </span><span style="letter-spacing:-0.38px;font-weight:bold;color:#800000;">lpos</span><span style="letter-spacing:-0.39px;color:#0000f0;">, </span><span style="letter-spacing:0.36px;color:#0000f0;">int</span><span style="letter-spacing:-0.05px;color:#0000f0;"> </span><span style="letter-spacing:-0.34px;font-weight:bold;color:#800000;">rpos</span><span style="letter-spacing:-0.38px;color:#0000f0;">)</span><span style="letter-spacing:-0.28px;color:#0000f0;"> : </span><span style="letter-spacing:-0.19px;">Logc</span></div></div><div class="rr" style="top:289px"><svg class="ic" width="17" height="16" viewBox="0 0 17 16"><circle cx="9.5" cy="7.5" r="5" fill="#c0c0c0" stroke="#000" stroke-width="1.1"/></svg><div class="tx" style="left:24.5px"><span style="letter-spacing:-0.32px;font-weight:bold;">PosCenter</span><span style="letter-spacing:-0.38px;color:#0000f0;">(</span><span style="letter-spacing:0.36px;color:#0000f0;">int</span><span style="letter-spacing:-0.05px;color:#0000f0;"> </span><span style="letter-spacing:-0.42px;font-weight:bold;color:#800000;">size</span><span style="letter-spacing:-0.39px;color:#0000f0;">, </span><span style="letter-spacing:0.36px;color:#0000f0;">int</span><span style="letter-spacing:-0.05px;color:#0000f0;"> </span><span style="letter-spacing:0.14px;font-weight:bold;color:#800000;">offset</span><span style="letter-spacing:-0.38px;color:#0000f0;">)</span><span style="letter-spacing:-0.28px;color:#0000f0;"> : </span><span style="letter-spacing:-0.19px;">Logc</span></div></div><div class="rr" style="top:306px"><svg class="ic" width="17" height="16" viewBox="0 0 17 16"><circle cx="9.5" cy="7.5" r="5" fill="#c0c0c0" stroke="#000" stroke-width="1.1"/></svg><div class="tx" style="left:24.5px"><span style="letter-spacing:-0.32px;font-weight:bold;">PosCenter</span><span style="letter-spacing:-0.38px;color:#0000f0;">(</span><span style="letter-spacing:0.36px;color:#0000f0;">int</span><span style="letter-spacing:-0.05px;color:#0000f0;"> </span><span style="letter-spacing:-0.42px;font-weight:bold;color:#800000;">size</span><span style="letter-spacing:-0.38px;color:#0000f0;">)</span><span style="letter-spacing:-0.28px;color:#0000f0;"> : </span><span style="letter-spacing:-0.19px;">Logc</span></div></div><div class="rr" style="top:323px"><svg class="ic" width="17" height="16" viewBox="0 0 17 16"><circle cx="9.5" cy="7.5" r="5" fill="#c0c0c0" stroke="#000" stroke-width="1.1"/></svg><div class="tx" style="left:24.5px"><span style="letter-spacing:-0.60px;font-weight:bold;">KEYtoK</span><span style="letter-spacing:-0.38px;color:#0000f0;">(</span><span style="letter-spacing:0.26px;">dword</span><span style="letter-spacing:-0.38px;color:#0000f0;">)</span><span style="letter-spacing:-0.28px;color:#0000f0;"> : </span><span style="letter-spacing:0.26px;">dword</span></div></div><div class="rr" style="top:340px"><svg class="ic" width="17" height="16" viewBox="0 0 17 16"><rect x="1" y="2" width="2" height="12" fill="#000"/><circle cx="9.5" cy="7.5" r="5" fill="#ffff00" stroke="#000" stroke-width="1.1"/><path d="M9.5 4v7M6 7.5h7M7 5l5 5M12 5l-5 5" stroke="#e00000" stroke-width="1" fill="none"/></svg><div class="tx" style="left:24.5px"><span style="letter-spacing:-0.16px;font-weight:bold;">Ctrl</span><span style="letter-spacing:-0.38px;color:#0000f0;">(</span><span style="letter-spacing:-0.16px;font-weight:bold;">Ctrl</span><span style="letter-spacing:0.61px;color:#0000f0;">&amp;)</span></div></div><div class="rr" style="top:357px"><svg class="ic" width="17" height="16" viewBox="0 0 17 16"><rect x="1" y="2" width="2" height="12" fill="#000"/><circle cx="9.5" cy="7.5" r="5" fill="#ffff00" stroke="#000" stroke-width="1.1"/></svg><div class="tx" style="left:24.5px"><span style="letter-spacing:0.05px;font-weight:bold;">operator</span><span style="padding:0 0.60px;font-weight:bold;">=</span><span style="letter-spacing:-0.38px;color:#0000f0;">(</span><span style="letter-spacing:-0.02px;">Ctrl</span><span style="letter-spacing:0.61px;color:#0000f0;">&amp;)</span><span style="letter-spacing:-0.28px;color:#0000f0;"> : </span><span style="letter-spacing:0.18px;color:#0000f0;">void</span></div></div><div class="rr" style="top:374px"><svg class="ic" width="17" height="16" viewBox="0 0 17 16"><rect x="1" y="2" width="2" height="12" fill="#000"/><rect x="4.5" y="3.5" width="9" height="9" fill="#ffff00" stroke="#000" stroke-width="1"/></svg><div class="tx" style="left:24.5px"><span style="letter-spacing:0.05px;font-weight:bold;">parent</span><span style="letter-spacing:-0.28px;color:#0000f0;"> : </span><span style="letter-spacing:-0.02px;">Ctrl</span><span style="letter-spacing:0.14px;color:#0000f0;"> *</span></div></div><div class="rr" style="top:391px"><svg class="ic" width="17" height="16" viewBox="0 0 17 16"><rect x="1" y="2" width="2" height="12" fill="#000"/><rect x="4.5" y="3.5" width="9" height="9" fill="#ffff00" stroke="#000" stroke-width="1"/></svg><div class="tx" style="left:24.5px"><span style="letter-spacing:0.18px;font-weight:bold;">top</span><span style="letter-spacing:-0.28px;color:#0000f0;"> : </span><span style="letter-spacing:0.34px;">Top</span><span style="letter-spacing:0.14px;color:#0000f0;"> *</span></div></div><div class="rr" style="top:408px"><svg class="ic" width="17" height="16" viewBox="0 0 17 16"><rect x="1" y="2" width="2" height="12" fill="#000"/><rect x="4.5" y="3.5" width="9" height="9" fill="#ffff00" stroke="#000" stroke-width="1"/></svg><div class="tx" style="left:24.5px"><span style="letter-spacing:-0.06px;font-weight:bold;">exitcode</span><span style="letter-spacing:-0.28px;color:#0000f0;"> : </span><span style="letter-spacing:0.36px;color:#0000f0;">int</span></div></div><div class="rr" style="top:425px"><svg class="ic" width="17" height="16" viewBox="0 0 17 16"><rect x="1" y="2" width="2" height="12" fill="#000"/><rect x="4.5" y="3.5" width="9" height="9" fill="#ffff00" stroke="#000" stroke-width="1"/></svg><div class="tx" style="left:24.5px"><span style="letter-spacing:-0.07px;font-weight:bold;">prev</span><span style="letter-spacing:-0.28px;color:#0000f0;"> : </span><span style="letter-spacing:-0.02px;">Ctrl</span><span style="letter-spacing:0.14px;color:#0000f0;"> *</span></div></div><div class="rr" style="top:442px"><svg class="ic" width="17" height="16" viewBox="0 0 17 16"><rect x="1" y="2" width="2" height="12" fill="#000"/><rect x="4.5" y="3.5" width="9" height="9" fill="#ffff00" stroke="#000" stroke-width="1"/></svg><div class="tx" style="left:24.5px"><span style="letter-spacing:0.08px;font-weight:bold;">next</span><span style="letter-spacing:-0.28px;color:#0000f0;"> : </span><span style="letter-spacing:-0.02px;">Ctrl</span><span style="letter-spacing:0.14px;color:#0000f0;"> *</span></div></div><div class="rr" style="top:459px"><svg class="ic" width="17" height="16" viewBox="0 0 17 16"><rect x="1" y="2" width="2" height="12" fill="#000"/><rect x="4.5" y="3.5" width="9" height="9" fill="#ffff00" stroke="#000" stroke-width="1"/></svg><div class="tx" style="left:24.5px"><span style="letter-spacing:-0.07px;font-weight:bold;">firstchild</span><span style="letter-spacing:-0.28px;color:#0000f0;"> : </span><span style="letter-spacing:-0.02px;">Ctrl</span><span style="letter-spacing:0.14px;color:#0000f0;"> *</span></div></div><div class="rr" style="top:476px"><svg class="ic" width="17" height="16" viewBox="0 0 17 16"><rect x="1" y="2" width="2" height="12" fill="#000"/><rect x="4.5" y="3.5" width="9" height="9" fill="#ffff00" stroke="#000" stroke-width="1"/></svg><div class="tx" style="left:24.5px"><span style="letter-spacing:-0.20px;font-weight:bold;">lastchild</span><span style="letter-spacing:-0.28px;color:#0000f0;"> : </span><span style="letter-spacing:-0.02px;">Ctrl</span><span style="letter-spacing:0.14px;color:#0000f0;"> *</span></div></div><div class="rr" style="top:493px"><svg class="ic" width="17" height="16" viewBox="0 0 17 16"><rect x="1" y="2" width="2" height="12" fill="#000"/><rect x="4.5" y="3.5" width="9" height="9" fill="#ffff00" stroke="#000" stroke-width="1"/></svg><div class="tx" style="left:24.5px"><span style="letter-spacing:-0.49px;font-weight:bold;">pos</span><span style="letter-spacing:-0.28px;color:#0000f0;"> : </span><span style="letter-spacing:-0.36px;">LogPos</span></div></div><div class="rr" style="top:510px"><svg class="ic" width="17" height="16" viewBox="0 0 17 16"><rect x="1" y="2" width="2" height="12" fill="#000"/><rect x="4.5" y="3.5" width="9" height="9" fill="#ffff00" stroke="#000" stroke-width="1"/></svg><div class="tx" style="left:24.5px"><span style="letter-spacing:-0.04px;font-weight:bold;">rect</span><span style="letter-spacing:-0.28px;color:#0000f0;"> : </span><span style="letter-spacing:-0.34px;">Rect16</span></div></div><div class="vl" style="left:513px;top:0;height:528px"></div><div class="sb" style="left:515px;top:0px;height:528px"><svg width="7" height="4" viewBox="0 0 7 4" style="position:absolute;left:5px;top:7px"><path d="M0 4 L3.5 0 L7 4 Z" fill="#404040"/></svg><svg width="7" height="4" viewBox="0 0 7 4" style="position:absolute;left:5px;bottom:6px"><path d="M0 0 L7 0 L3.5 4 Z" fill="#404040"/></svg><div class="th" style="top:18px;height:14px"><i style="top:2px"></i></div></div></div></div></div></div>
</div>
<div id="s2"><div class="band" style="top:85px;height:94px"></div><div class="band" style="top:210px;height:39px"></div><div class="band" style="top:275px;height:97px"></div><div class="band" style="top:521px;height:22px"></div><div class="gl" style="top:148px"></div><div class="gl" style="top:164px"></div><div class="code" style="left:-0.5px;top:11.5px;color:#7a9a20;font-style:italic;font-weight:normal">o</div><div class="code" style="left:-1px;top:75px;color:#303030;font-weight:normal">{</div><div class="code" style="left:-1px;top:186.5px;color:#a02020;font-weight:normal">r</div><div class="code" style="left:-1px;top:316.5px;color:#3098a8;font-weight:normal">M</div><div class="code" style="left:-1px;top:396px;color:#303030;font-weight:normal">1</div><div class="code" style="left:-1px;top:422px;color:#50a070;font-weight:normal">(</div><div class="code" style="left:-1px;top:434.5px;color:#202020;">,</div><div class="code" style="left:-1px;top:453px;color:#202020;font-weight:normal">C</div><div class="code" style="left:-1px;top:467px;color:#202020;">;</div>
<div class="win w2" style="left:7px;top:3px;height:700px"><div class="fr"></div><div class="tb"></div><div class="side l"></div><div class="side r"></div><div class="glow"></div><div class="blur b1"></div><div class="blur b2"></div><div class="blur b3"></div><div class="blur b4"></div><svg class="star" width="18" height="18" viewBox="-9 -9 18 18"><defs><radialGradient id="sg2"><stop offset="0" stop-color="#20ecec"/><stop offset=".32" stop-color="#0caaaa"/><stop offset="1" stop-color="#066868"/></radialGradient></defs>
<path d="M0 -8 L1.2 -2.9 L5.5 -5.5 L2.9 -1.2 L8 0 L2.9 1.2 L5.5 5.5 L1.2 2.9 L0 8 L-1.2 2.9 L-5.5 5.5 L-2.9 1.2 L-8 0 L-2.9 -1.2 L-5.5 -5.5 L-1.2 -2.9 Z" fill="url(#sg2)" stroke="#154040" stroke-width=".8" stroke-opacity=".85"/></svg><div class="title"><span style="letter-spacing:0.09px;">Navigator</span></div><div class="caps"><div class="cb min"><i></i></div><div class="cb max"><i></i></div><div class="cb cls"><svg width="14" height="11" viewBox="0 0 14 11"><path d="M1.2 1.4h3.9L7 3.7 8.9 1.4h3.9L9 5.6l3.8 4.2H8.9L7 7.5 5.1 9.8H1.2L5 5.6z" fill="#fff" stroke="#3c3c46" stroke-width="1" stroke-linejoin="round"/></svg></div></div><div class="cl" style="height:662px"><div class="lbl" style="left:3.5px;top:7px"><span style="letter-spacing:-0.46px;">Search</span></div>
<div class="edit" style="left:51px;top:4px;width:192px;height:21px"><div class="etx"><span class="sel"><span style="letter-spacing:-0.02px;">Ctrl</span></span></div><svg width="7.4" height="4.2" viewBox="0 0 9 5" style="position:absolute;left:179px;top:7px"><path d="M0 0H9L4.5 5Z" fill="#000"/></svg></div>
<div class="btn def" style="left:592px;top:5px"><b></b><div class="bt"><span style="letter-spacing:-0.67px;">OK</span></div></div>
<div class="btn" style="left:665px;top:5px"><b></b><div class="bt"><span style="letter-spacing:-0.39px;">Cancel</span></div></div>
<div class="pane" style="left:4px;top:36px;width:188px;height:416px"><div class="ct"><div class="lh" style="width:166px;height:15px"><div class="tx" style="left:6.5px"><span style="padding:0 0.17px;">*</span></div></div><div class="hl" style="top:15px;width:166px"></div><div class="lr" style="top:16px"><div class="tx"><span style="letter-spacing:-0.01px;">&lt;</span><span style="letter-spacing:-0.08px;">files</span><span style="letter-spacing:-0.01px;">&gt;</span></div></div><div class="vl" style="left:166px;top:0;height:32px"></div><div class="sb" style="left:168px;top:0px;height:412px"><svg width="7" height="4" viewBox="0 0 7 4" style="position:absolute;left:5px;top:7px"><path d="M0 4 L3.5 0 L7 4 Z" fill="#b0b0b0"/></svg><svg width="7" height="4" viewBox="0 0 7 4" style="position:absolute;left:5px;bottom:6px"><path d="M0 0 L7 0 L3.5 4 Z" fill="#b0b0b0"/></svg></div></div></div>
<div class="pane" style="left:4px;top:458px;width:188px;height:300px"><div class="ct"><div class="sb" style="left:168px;top:0px;height:296px"><svg width="7" height="4" viewBox="0 0 7 4" style="position:absolute;left:5px;top:7px"><path d="M0 4 L3.5 0 L7 4 Z" fill="#b0b0b0"/></svg><svg width="7" height="4" viewBox="0 0 7 4" style="position:absolute;left:5px;bottom:6px"><path d="M0 0 L7 0 L3.5 4 Z" fill="#b0b0b0"/></svg></div></div></div>
<div class="pane" style="left:197px;top:36px;width:535px;height:700px"><div class="ct"><div class="rh" style="width:513px;height:16px"><div class="tx" style="left:6.5px;top:0px"><span style="padding:0 0.16px;font-weight:bold;">&lt;</span><span style="letter-spacing:-0.15px;font-weight:bold;">files</span><span style="padding:0 0.16px;font-weight:bold;">&gt;</span></div></div><div class="hl" style="top:16px;width:513px"></div><div class="rr" style="top:17px"><div class="tx" style="left:6.5px"><span style="letter-spacing:-0.07px;">CtrlLib</span><span style="padding:0 0.67px;">/</span><span style="letter-spacing:-0.30px;font-weight:bold;">CtrlLib</span><span style="letter-spacing:-0.35px;font-weight:bold;">.</span><span style="letter-spacing:-0.07px;font-weight:bold;">h</span></div></div><div class="rr" style="top:34px"><div class="tx" style="left:6.5px"><span style="letter-spacing:-0.07px;">CtrlLib</span><span style="padding:0 0.67px;">/</span><span style="letter-spacing:-0.12px;font-weight:bold;">CtrlLibInit</span><span style="letter-spacing:-0.35px;font-weight:bold;">.</span><span style="letter-spacing:-0.32px;font-weight:bold;">cpp</span></div></div><div class="rr" style="top:51px"><div class="tx" style="left:6.5px"><span style="letter-spacing:-0.07px;">CtrlLib</span><span style="padding:0 0.67px;">/</span><span style="letter-spacing:-0.35px;font-weight:bold;">PushCtrl</span><span style="letter-spacing:-0.35px;font-weight:bold;">.</span><span style="letter-spacing:-0.07px;font-weight:bold;">h</span></div></div><div class="rr" style="top:68px"><div class="tx" style="left:6.5px"><span style="letter-spacing:-0.07px;">CtrlLib</span><span style="padding:0 0.67px;">/</span><span style="letter-spacing:-0.21px;font-weight:bold;">EditCtrl</span><span style="letter-spacing:-0.35px;font-weight:bold;">.</span><span style="letter-spacing:-0.07px;font-weight:bold;">h</span></div></div><div class="rr" style="top:85px"><div class="tx" style="left:6.5px"><span style="letter-spacing:-0.07px;">CtrlLib</span><span style="padding:0 0.67px;">/</span><span style="letter-spacing:-0.21px;font-weight:bold;">EditCtrl</span><span style="letter-spacing:-0.35px;font-weight:bold;">.</span><span style="letter-spacing:-0.09px;font-weight:bold;">hpp</span></div></div><div class="rr" style="top:102px"><div class="tx" style="left:6.5px"><span style="letter-spacing:-0.07px;">CtrlLib</span><span style="padding:0 0.67px;">/</span><span style="letter-spacing:-0.07px;font-weight:bold;">HeaderCtrl</span><span style="letter-spacing:-0.35px;font-weight:bold;">.</span><span style="letter-spacing:-0.07px;font-weight:bold;">h</span></div></div><div class="rr" style="top:119px"><div class="tx" style="left:6.5px"><span style="letter-spacing:-0.07px;">CtrlLib</span><span style="padding:0 0.67px;">/</span><span style="letter-spacing:-0.07px;font-weight:bold;">HeaderCtrl</span><span style="letter-spacing:-0.35px;font-weight:bold;">.</span><span style="letter-spacing:-0.32px;font-weight:bold;">cpp</span></div></div><div class="rr" style="top:136px"><div class="tx" style="left:6.5px"><span style="letter-spacing:-0.07px;">CtrlLib</span><span style="padding:0 0.67px;">/</span><span style="letter-spacing:-0.13px;font-weight:bold;">ArrayCtrl</span><span style="letter-spacing:-0.35px;font-weight:bold;">.</span><span style="letter-spacing:-0.07px;font-weight:bold;">h</span></div></div><div class="rr" style="top:153px"><div class="tx" style="left:6.5px"><span style="letter-spacing:-0.07px;">CtrlLib</span><span style="padding:0 0.67px;">/</span><span style="letter-spacing:-0.13px;font-weight:bold;">ArrayCtrl</span><span style="letter-spacing:-0.35px;font-weight:bold;">.</span><span style="letter-spacing:-0.32px;font-weight:bold;">cpp</span></div></div><div class="rr" style="top:170px"><div class="tx" style="left:6.5px"><span style="letter-spacing:-0.07px;">CtrlLib</span><span style="padding:0 0.67px;">/</span><span style="letter-spacing:-0.18px;font-weight:bold;">StaticCtrl</span><span style="letter-spacing:-0.35px;font-weight:bold;">.</span><span style="letter-spacing:-0.07px;font-weight:bold;">h</span></div></div><div class="rr" style="top:187px"><div class="tx" style="left:6.5px"><span style="letter-spacing:-0.07px;">CtrlLib</span><span style="padding:0 0.67px;">/</span><span style="letter-spacing:-0.21px;font-weight:bold;">SliderCtrl</span><span style="letter-spacing:-0.35px;font-weight:bold;">.</span><span style="letter-spacing:-0.07px;font-weight:bold;">h</span></div></div><div class="rr" style="top:204px"><div class="tx" style="left:6.5px"><span style="letter-spacing:-0.07px;">CtrlLib</span><span style="padding:0 0.67px;">/</span><span style="letter-spacing:-0.21px;font-weight:bold;">SliderCtrl</span><span style="letter-spacing:-0.35px;font-weight:bold;">.</span><span style="letter-spacing:-0.32px;font-weight:bold;">cpp</span></div></div><div class="rr" style="top:221px"><div class="tx" style="left:6.5px"><span style="letter-spacing:-0.07px;">CtrlLib</span><span style="padding:0 0.67px;">/</span><span style="letter-spacing:-0.05px;font-weight:bold;">DateTimeCtrl</span><span style="letter-spacing:-0.35px;font-weight:bold;">.</span><span style="letter-spacing:-0.07px;font-weight:bold;">h</span></div></div><div class="rr" style="top:238px"><div class="tx" style="left:6.5px"><span style="letter-spacing:-0.07px;">CtrlLib</span><span style="padding:0 0.67px;">/</span><span style="letter-spacing:-0.05px;font-weight:bold;">DateTimeCtrl</span><span style="letter-spacing:-0.35px;font-weight:bold;">.</span><span style="letter-spacing:-0.32px;font-weight:bold;">cpp</span></div></div><div class="rr" style="top:255px"><div class="tx" style="left:6.5px"><span style="letter-spacing:-0.07px;">CtrlLib</span><span style="padding:0 0.67px;">/</span><span style="letter-spacing:-0.26px;font-weight:bold;">SuggestCtrl</span><span style="letter-spacing:-0.35px;font-weight:bold;">.</span><span style="letter-spacing:-0.07px;font-weight:bold;">h</span></div></div><div class="rr" style="top:272px"><div class="tx" style="left:6.5px"><span style="letter-spacing:-0.07px;">CtrlLib</span><span style="padding:0 0.67px;">/</span><span style="letter-spacing:-0.26px;font-weight:bold;">SuggestCtrl</span><span style="letter-spacing:-0.35px;font-weight:bold;">.</span><span style="letter-spacing:-0.32px;font-weight:bold;">cpp</span></div></div><div class="rr" style="top:289px"><div class="tx" style="left:6.5px"><span style="letter-spacing:-0.07px;">CtrlLib</span><span style="padding:0 0.67px;">/</span><span style="letter-spacing:-0.10px;font-weight:bold;">TabCtrl</span><span style="letter-spacing:-0.35px;font-weight:bold;">.</span><span style="letter-spacing:-0.07px;font-weight:bold;">h</span></div></div><div class="rr" style="top:306px"><div class="tx" style="left:6.5px"><span style="letter-spacing:-0.07px;">CtrlLib</span><span style="padding:0 0.67px;">/</span><span style="letter-spacing:-0.10px;font-weight:bold;">TabCtrl</span><span style="letter-spacing:-0.35px;font-weight:bold;">.</span><span style="letter-spacing:-0.32px;font-weight:bold;">cpp</span></div></div><div class="rr" style="top:323px"><div class="tx" style="left:6.5px"><span style="letter-spacing:-0.07px;">CtrlLib</span><span style="padding:0 0.67px;">/</span><span style="letter-spacing:-0.10px;font-weight:bold;">TreeCtrl</span><span style="letter-spacing:-0.35px;font-weight:bold;">.</span><span style="letter-spacing:-0.07px;font-weight:bold;">h</span></div></div><div class="rr" style="top:340px"><div class="tx" style="left:6.5px"><span style="letter-spacing:-0.07px;">CtrlLib</span><span style="padding:0 0.67px;">/</span><span style="letter-spacing:-0.10px;font-weight:bold;">TreeCtrl</span><span style="letter-spacing:-0.35px;font-weight:bold;">.</span><span style="letter-spacing:-0.32px;font-weight:bold;">cpp</span></div></div><div class="rr" style="top:357px"><div class="tx" style="left:6.5px"><span style="letter-spacing:-0.07px;">CtrlLib</span><span style="padding:0 0.67px;">/</span><span style="letter-spacing:-0.03px;font-weight:bold;">CtrlUtil</span><span style="letter-spacing:-0.35px;font-weight:bold;">.</span><span style="letter-spacing:-0.07px;font-weight:bold;">h</span></div></div><div class="rr" style="top:374px"><div class="tx" style="left:6.5px"><span style="letter-spacing:-0.07px;">CtrlLib</span><span style="padding:0 0.67px;">/</span><span style="letter-spacing:-0.03px;font-weight:bold;">CtrlUtil</span><span style="letter-spacing:-0.35px;font-weight:bold;">.</span><span style="letter-spacing:-0.32px;font-weight:bold;">cpp</span></div></div><div class="rr" style="top:391px"><div class="tx" style="left:6.5px"><span style="letter-spacing:-0.07px;">CtrlLib</span><span style="padding:0 0.67px;">/</span><span style="letter-spacing:-0.16px;font-weight:bold;">Ctrl</span><span style="letter-spacing:-0.35px;font-weight:bold;">.</span><span style="letter-spacing:0.07px;font-weight:bold;">iml</span></div></div><div class="rr" style="top:408px"><div class="tx" style="left:6.5px"><span style="letter-spacing:-0.07px;">CtrlLib</span><span style="padding:0 0.67px;">/</span><span style="letter-spacing:-0.16px;font-weight:bold;">Ctrl</span><span style="letter-spacing:-0.35px;font-weight:bold;">.</span><span style="letter-spacing:-0.13px;font-weight:bold;">lay</span></div></div><div class="rr" style="top:425px"><div class="tx" style="left:6.5px"><span style="letter-spacing:-0.07px;">CtrlLib</span><span style="padding:0 0.67px;">/</span><span style="letter-spacing:-0.30px;font-weight:bold;">CtrlLib</span><span style="letter-spacing:-0.35px;font-weight:bold;">.</span><span style="letter-spacing:0.64px;font-weight:bold;">t</span></div></div><div class="rr" style="top:442px"><div class="tx" style="left:6.5px"><span style="letter-spacing:-0.07px;">CtrlLib</span><span style="padding:0 0.67px;">/</span><span style="letter-spacing:-0.32px;font-weight:bold;">LNGCtrl</span><span style="letter-spacing:-0.35px;font-weight:bold;">.</span><span style="letter-spacing:-0.32px;font-weight:bold;">cpp</span></div></div><div class="rr" style="top:459px"><div class="tx" style="left:6.5px"><span style="letter-spacing:-0.07px;">CtrlLib</span><span style="padding:0 0.67px;">/</span><span style="letter-spacing:-0.40px;font-weight:bold;">Ctrls</span><span style="letter-spacing:-0.35px;font-weight:bold;">.</span><span style="letter-spacing:0.07px;font-weight:bold;">iml</span></div></div><div class="rr" style="top:476px"><div class="tx" style="left:6.5px"><span style="letter-spacing:-0.07px;">CtrlLib</span><span style="padding:0 0.67px;">/</span><span style="letter-spacing:-0.30px;font-weight:bold;">CtrlLib</span><span style="letter-spacing:-0.35px;font-weight:bold;">.</span><span style="letter-spacing:-0.74px;font-weight:bold;">usc</span></div></div><div class="rr" style="top:493px"><div class="tx" style="left:6.5px"><span style="letter-spacing:-0.15px;">CtrlCore</span><span style="padding:0 0.67px;">/</span><span style="letter-spacing:-0.25px;font-weight:bold;">CtrlCore</span><span style="letter-spacing:-0.35px;font-weight:bold;">.</span><span style="letter-spacing:-0.07px;font-weight:bold;">h</span></div></div><div class="rr" style="top:510px"><div class="tx" style="left:6.5px"><span style="letter-spacing:-0.15px;">CtrlCore</span><span style="padding:0 0.67px;">/</span><span style="letter-spacing:-0.25px;font-weight:bold;">CtrlCore</span><span style="letter-spacing:-0.35px;font-weight:bold;">.</span><span style="letter-spacing:-0.32px;font-weight:bold;">cpp</span></div></div><div class="vl" style="left:513px;top:0;height:696px"></div><div class="sb" style="left:515px;top:0px;height:696px"><svg width="7" height="4" viewBox="0 0 7 4" style="position:absolute;left:5px;top:7px"><path d="M0 4 L3.5 0 L7 4 Z" fill="#404040"/></svg><svg width="7" height="4" viewBox="0 0 7 4" style="position:absolute;left:5px;bottom:6px"><path d="M0 0 L7 0 L3.5 4 Z" fill="#404040"/></svg><div class="th" style="top:18px;height:277px"><i style="top:133px"></i></div></div></div></div></div></div>
</div>
</body></html>
